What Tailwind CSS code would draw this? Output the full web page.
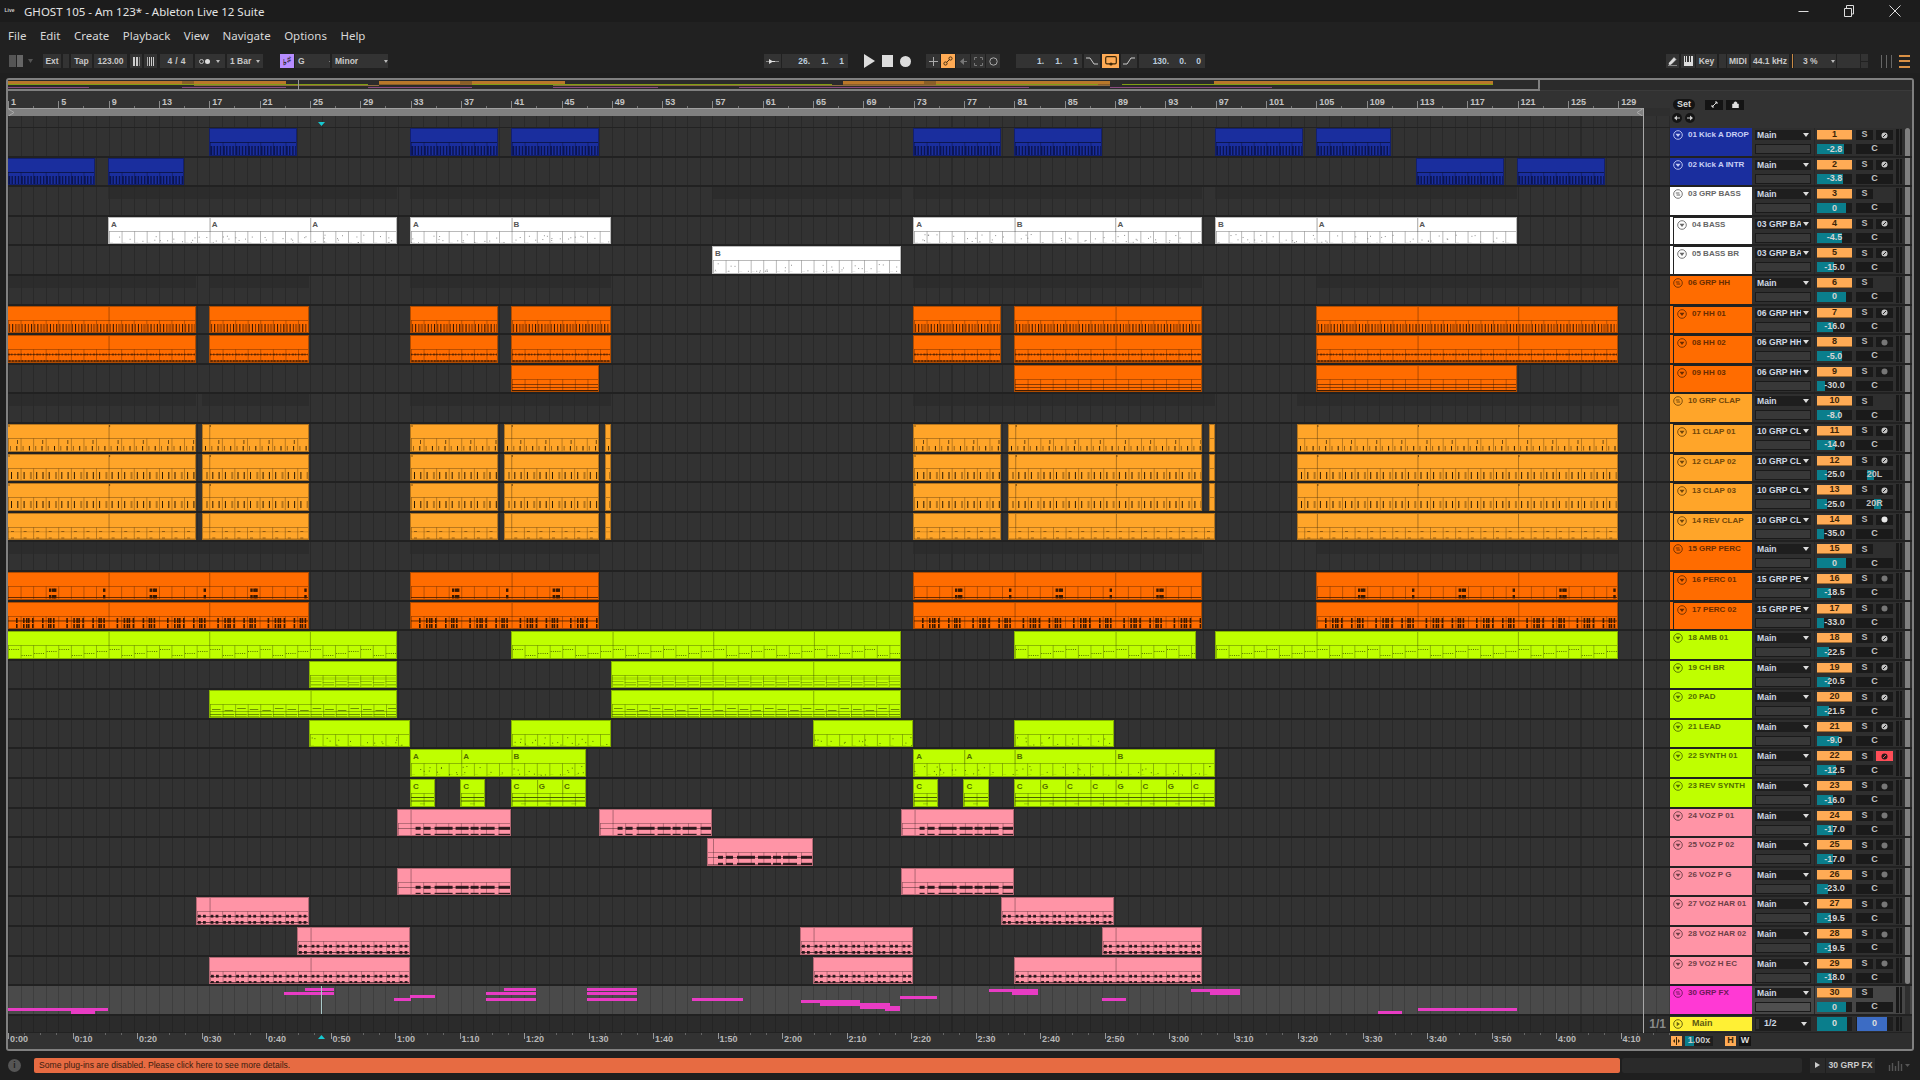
<!DOCTYPE html>
<html lang="en">
<head>
<meta charset="utf-8">
<title>GHOST 105 - Am 123* - Ableton Live 12 Suite</title>
<script src="https://cdn.jsdelivr.net/npm/@tailwindcss/browser@4"></script>
</head>
<body class="m-0 w-[1920px] h-[1080px] overflow-hidden bg-[#1f1f1f] font-['Liberation_Sans',sans-serif] text-[#d0d0d0] flex flex-col">

<!-- title bar -->
<div class="h-[22px] shrink-0 bg-[#1c1c1c] flex items-center relative">
  <div class="ml-[4px] w-[11px] h-[9px] flex items-center justify-center text-[5px] font-bold text-[#cfcfcf]">Live</div>
  <div class="ml-[9px] mt-[1px] font-['Noto_Sans',sans-serif] text-[11.5px] text-[#e4e4e4]">GHOST 105 - Am 123* - Ableton Live 12 Suite</div>
  <div class="ml-auto flex items-center">
    <svg class="w-[11px] h-[11px] mr-[35px]" viewBox="0 0 11 11"><path d="M0.5 5.5H10.5" stroke="#ddd" fill="none"/></svg>
    <svg class="w-[10px] h-[12px] mr-[35px]" viewBox="0 0 10 12"><path d="M0.5 3.5H7.5V11.5H0.5ZM2.5 3.5V0.5H9.5V9H7.5" stroke="#ddd" fill="none"/></svg>
    <svg class="w-[12px] h-[12px] mr-[19px]" viewBox="0 0 12 12"><path d="M0.5 0.5L11.5 11.5M11.5 0.5L0.5 11.5" stroke="#ddd" fill="none"/></svg>
  </div>
</div>

<!-- menu -->
<div class="h-[27px] shrink-0 bg-[#212121] flex items-center pl-[8px] pt-[1px] gap-[13.5px] font-['Noto_Sans',sans-serif] text-[11.5px] text-[#d8d8d8]">
  <span>File</span><span>Edit</span><span>Create</span><span>Playback</span><span>View</span><span>Navigate</span><span>Options</span><span>Help</span>
</div>

<!-- control bar -->
<div class="h-[24px] shrink-0 bg-[#212121] flex items-center text-[8.5px] font-bold text-[#c8c8c8] whitespace-nowrap">
  <div class="ml-[9px] w-[14px] h-[12px] flex gap-[1px]"><div class="w-[6.5px] bg-[#555]"></div><div class="w-[6.5px] bg-[#666]"></div></div>
  <svg class="ml-[5px] w-[5px] h-[4px]" viewBox="0 0 5 4"><path d="M0 0H5L2.5 4Z" fill="#555"/></svg>
  <div class="ml-[10px] w-[18px] h-[14px] bg-[#333] flex items-center justify-center">Ext</div>
  <div class="ml-[2px] w-[6px] h-[14px] bg-[#333]"></div>
  <div class="ml-[2px] w-[21px] h-[14px] bg-[#333] flex items-center justify-center">Tap</div>
  <div class="ml-[2px] w-[33px] h-[14px] bg-[#333] flex items-center justify-center">123.00</div>
  <div class="ml-[3px] w-[12px] h-[14px] bg-[#333] flex items-center justify-center gap-[1px]"><i class="w-[2px] h-[9px] bg-[#ccc]"></i><i class="w-[2px] h-[9px] bg-[#ccc]"></i><i class="w-[1px] h-[9px] bg-[#888]"></i></div>
  <div class="ml-[2px] w-[13px] h-[14px] bg-[#333] flex items-center justify-center gap-[1px]"><i class="w-[1px] h-[9px] bg-[#aaa]"></i><i class="w-[1px] h-[9px] bg-[#ccc]"></i><i class="w-[1px] h-[9px] bg-[#ccc]"></i><i class="w-[1px] h-[9px] bg-[#ccc]"></i></div>
  <div class="ml-[3px] w-[33px] h-[14px] bg-[#333] flex items-center justify-center gap-[3px]"><span>4</span><span>/</span><span>4</span></div>
  <div class="ml-[2px] w-[30px] h-[14px] bg-[#333] flex items-center pl-[4px] gap-[1px]"><i class="w-[5px] h-[5px] rounded-full border border-[#bbb]"></i><i class="w-[5px] h-[5px] rounded-full bg-[#ddd]"></i><svg class="ml-[5px] w-[4px] h-[3px]" viewBox="0 0 4 3"><path d="M0 0H4L2 3Z" fill="#bbb"/></svg></div>
  <div class="ml-[2px] w-[36px] h-[14px] bg-[#333] flex items-center pl-[3px]">1 Bar<svg class="ml-[5px] w-[4px] h-[3px]" viewBox="0 0 4 3"><path d="M0 0H4L2 3Z" fill="#bbb"/></svg></div>
  <div class="ml-[17px] w-[14px] h-[14px] bg-[#b78dff] text-[#222] flex items-center justify-center text-[8px]"><span class="mt-[3px]">♭</span><span class="mt-[-3px]">♯</span></div>
  <div class="ml-[1px] w-[35px] h-[14px] bg-[#333] flex items-center pl-[3px]">G<svg class="ml-[24px] w-[4px] h-[3px]" viewBox="0 0 4 3"><path d="M0 0H4L2 3Z" fill="#bbb"/></svg></div>
  <div class="ml-[2px] w-[56px] h-[14px] bg-[#333] flex items-center pl-[3px]">Minor<svg class="ml-[26px] w-[4px] h-[3px]" viewBox="0 0 4 3"><path d="M0 0H4L2 3Z" fill="#bbb"/></svg></div>

  <!-- arrangement position -->
  <div class="ml-[376px] w-[17px] h-[14px] bg-[#333] flex items-center justify-center"><svg class="w-[13px] h-[7px]" viewBox="0 0 13 7"><path d="M0 3.5H5M9 3.5H13" stroke="#888"/><path d="M3 1L7 3.5L3 6Z" fill="#ddd"/><path d="M4 3H9V4H4Z" fill="#ddd"/></svg></div>
  <div class="ml-[1px] w-[66px] h-[14px] bg-[#333] flex items-center justify-end pr-[4px] gap-[11px] text-[#bcccdc]"><span>26.</span><span>1.</span><span>1</span></div>
  <svg class="ml-[16px] w-[11px] h-[14px]" viewBox="0 0 11 14"><path d="M0 0L11 7L0 14Z" fill="#dcdcdc"/></svg>
  <div class="ml-[7px] w-[11px] h-[12px] bg-[#dcdcdc]"></div>
  <div class="ml-[7px] w-[11px] h-[11px] rounded-full bg-[#dcdcdc]"></div>
  <div class="ml-[15px] w-[14px] h-[14px] bg-[#333] flex items-center justify-center"><svg class="w-[9px] h-[9px]" viewBox="0 0 9 9"><path d="M4.5 0V9M0 4.5H9" stroke="#aaa"/></svg></div>
  <div class="ml-[1px] w-[14px] h-[14px] bg-[#ffab55] flex items-center justify-center"><svg class="w-[10px] h-[10px]" viewBox="0 0 10 10"><circle cx="2.5" cy="7.5" r="1.6" fill="none" stroke="#4a3010"/><circle cx="7.5" cy="2.5" r="1.6" fill="none" stroke="#4a3010"/><path d="M3.5 6.5L6.5 3.5" stroke="#4a3010"/></svg></div>
  <div class="ml-[1px] w-[14px] h-[14px] bg-[#333] flex items-center justify-center"><svg class="w-[8px] h-[7px]" viewBox="0 0 8 7"><path d="M5 0V7L1 3.5Z" fill="#777"/><path d="M5 3H8V4H5Z" fill="#777"/></svg></div>
  <div class="ml-[1px] w-[14px] h-[14px] bg-[#333] flex items-center justify-center"><svg class="w-[9px] h-[9px]" viewBox="0 0 9 9"><path d="M0.5 3V0.5H3M6 0.5H8.5V3M8.5 6V8.5H6M3 8.5H0.5V6" stroke="#777" fill="none"/></svg></div>
  <div class="ml-[1px] w-[14px] h-[14px] bg-[#333] flex items-center justify-center"><svg class="w-[9px] h-[9px]" viewBox="0 0 9 9"><circle cx="4.5" cy="4.5" r="3.7" stroke="#aaa" fill="none"/></svg></div>

  <!-- loop -->
  <div class="ml-[16px] w-[66px] h-[14px] bg-[#333] flex items-center justify-end pr-[4px] gap-[11px] text-[#bcccdc]"><span>1.</span><span>1.</span><span>1</span></div>
  <div class="ml-[2px] w-[16px] h-[14px] bg-[#333] flex items-center justify-center"><svg class="w-[12px] h-[8px]" viewBox="0 0 12 8"><path d="M0 1H4L8 7H12" stroke="#ccc" fill="none"/></svg></div>
  <div class="ml-[2px] w-[17px] h-[14px] bg-[#ffab55] flex items-center justify-center"><svg class="w-[12px] h-[10px]" viewBox="0 0 12 10"><path d="M2 0.7H10Q11.3 0.7 11.3 2V6.5Q11.3 7.8 10 7.8H2Q0.7 7.8 0.7 6.5V2Q0.7 0.7 2 0.7Z" fill="none" stroke="#3c2708" stroke-width="1.2"/><circle cx="6" cy="8" r="1.6" fill="#3c2708"/></svg></div>
  <div class="ml-[2px] w-[16px] h-[14px] bg-[#333] flex items-center justify-center"><svg class="w-[12px] h-[8px]" viewBox="0 0 12 8"><path d="M0 7H4L8 1H12" stroke="#ccc" fill="none"/></svg></div>
  <div class="ml-[2px] w-[66px] h-[14px] bg-[#333] flex items-center justify-end pr-[4px] gap-[10px] text-[#bcccdc]"><span>130.</span><span>0.</span><span>0</span></div>

  <!-- right side -->
  <div class="ml-[461px] w-[13px] h-[14px] bg-[#333] flex items-center justify-center"><svg class="w-[9px] h-[10px]" viewBox="0 0 9 10"><path d="M1 7L6 1.5L8 3.5L3 8.5H1ZM0 9.5H9" fill="#ddd" stroke="#ddd" stroke-width="0.5"/></svg></div>
  <div class="ml-[2px] w-[14px] h-[14px] bg-[#333] flex items-center justify-center"><div class="w-[9px] h-[10px] bg-[#ddd] flex gap-[1px] pl-[1px]"><i class="w-[1.5px] h-[6px] bg-[#333]"></i><i class="w-[1.5px] h-[6px] bg-[#333]"></i><i class="w-[1.5px] h-[6px] bg-[#333]"></i></div></div>
  <div class="ml-[1px] w-[21px] h-[14px] bg-[#333] flex items-center justify-center">Key</div>
  <div class="ml-[2px] w-[7px] h-[14px] bg-[#333]"></div>
  <div class="ml-[1px] w-[22px] h-[14px] bg-[#333] flex items-center justify-center">MIDI</div>
  <div class="ml-[2px] w-[38px] h-[14px] bg-[#333] flex items-center justify-center">44.1 kHz</div>
  <div class="ml-[3px] w-[1px] h-[14px] bg-[#c98a45]"></div>
  <div class="ml-[1px] w-[42px] h-[14px] bg-[#333] flex items-center pl-[9px]">3 %<svg class="ml-[13px] w-[4px] h-[3px]" viewBox="0 0 4 3"><path d="M0 0H4L2 3Z" fill="#bbb"/></svg></div>
  <div class="ml-[1px] w-[23px] h-[14px] bg-[#333]"></div>
  <div class="ml-[1px] w-[7px] h-[14px] flex flex-col gap-[1px]"><div class="flex-1 bg-[#333]"></div><div class="flex-1 bg-[#333]"></div></div>
  <div class="ml-[13px] w-[11px] h-[13px] flex justify-between"><i class="w-[1px] bg-[#666]"></i><i class="w-[1px] bg-[#666]"></i><i class="w-[1px] bg-[#666]"></i></div>
  <div class="ml-[7px] w-[11px] h-[13px] flex flex-col justify-between"><i class="h-[2px] bg-[#d99045]"></i><i class="h-[2px] bg-[#d99045]"></i><i class="h-[2px] bg-[#d99045]"></i></div>
</div>

<!-- main frame -->
<div id="frame" class="relative mt-[5px] ml-[6px] w-[1908px] h-[973px] shrink-0 border-2 border-[#808080] rounded-[3px] bg-[#2e2e2e] flex flex-col overflow-hidden">
  <div id="overview" class="relative h-[10px] shrink-0 bg-[#2b2b2b]"></div>
  <div class="h-[1px] shrink-0 bg-[#3a3a3a]"></div>
  <div class="flex h-[37px] shrink-0">
    <div class="w-[1662px] flex flex-col">
      <div id="ruler" class="relative h-[17px] bg-[#323232] text-[9px] font-bold text-[#c4c4c4]"></div>
      <div class="h-[8px] bg-[#808080] border-t border-[#a0a0a0] w-[1635px] relative flex items-center">
        <svg class="absolute left-0 top-0 w-[7px] h-[7px]" viewBox="0 0 7 7"><path d="M0.5 0L6 3.5L0.5 7" stroke="#aaa" fill="none"/></svg>
        <svg class="absolute right-0 top-0 w-[7px] h-[7px]" viewBox="0 0 7 7"><path d="M6.5 0L1 3.5L6.5 7" stroke="#aaa" fill="none"/></svg>
      </div>
      <div class="relative h-[11px] bg-[#323232] bg-[repeating-linear-gradient(90deg,#292929_0_1px,transparent_1px_12.58px)]">
        <svg class="absolute left-[310px] top-[6px] w-[7px] h-[4px]" viewBox="0 0 7 4"><path d="M0 0H7L3.5 4Z" fill="#16c8d0"/></svg>
      </div>
      <div class="h-[1px] bg-[#222]"></div>
    </div>
    <div class="w-[242px] bg-[#323232] relative">
      <div class="flex items-center h-[15px] mt-[6px] pl-[3px] text-[9px] font-bold text-[#d8d8d8]">
        <div class="w-[22px] h-[11px] rounded-full bg-[#141414] flex items-center justify-center">Set</div>
        <div class="ml-[10px] w-[18px] h-[10px] bg-[#141414] flex items-center justify-center"><svg class="w-[7px] h-[7px]" viewBox="0 0 7 7"><path d="M1 6L6 1M4 1H6V3M1 4V6H3" stroke="#ddd" fill="none"/></svg></div>
        <div class="ml-[3px] w-[18px] h-[10px] bg-[#141414] flex items-center justify-center"><svg class="w-[7px] h-[7px]" viewBox="0 0 7 7"><path d="M0.5 3H6.5V7H0.5ZM2 3V1.5Q3.5 0 5 1.5V3" fill="#ddd" stroke="#ddd" stroke-width="0.5"/></svg></div>
      </div>
      <div class="flex pl-[2px] gap-[3px] mt-[1px]">
        <div class="w-[10px] h-[10px] rounded-full bg-[#141414] flex items-center justify-center"><svg class="w-[6px] h-[6px]" viewBox="0 0 6 6"><path d="M0 3L3 0.5V5.5ZM3 2.5H6V3.5H3Z" fill="#ccc"/></svg></div>
        <div class="w-[10px] h-[10px] rounded-full bg-[#141414] flex items-center justify-center"><svg class="w-[6px] h-[6px]" viewBox="0 0 6 6"><path d="M6 3L3 0.5V5.5ZM3 2.5H0V3.5H3Z" fill="#ccc"/></svg></div>
      </div>
    </div>
  </div>
  <div id="tracks" class="h-[888px] shrink-0 flex flex-col"></div>
  <!-- master row -->
  <div class="flex h-[17px] shrink-0 border-b border-[#222]">
    <div class="w-[1662px] relative bg-[#2b2b2b] bg-[repeating-linear-gradient(90deg,#242424_0_1px,transparent_1px_12.58px)] flex justify-end items-center pr-[4px] text-[#8a8a8a] text-[12px] font-bold">1/1</div>
    <div class="w-[242px] flex pt-[1px] pb-[1px] bg-[#2e2e2e] text-[9px] font-bold">
      <div class="w-[82px] bg-[#fff034] text-[#5e5a10] flex items-center pl-[3px]">
        <svg class="w-[10px] h-[10px]" viewBox="0 0 10 10"><circle cx="5" cy="5" r="4.3" fill="none" stroke="#6a6510"/><path d="M3.7 2.8L7 5L3.7 7.2Z" fill="#6a6510"/></svg>
        <span class="ml-[9px]">Main</span>
      </div>
      <div class="ml-[3px] w-[56px] bg-[#1e1e1e] text-[#cfd8e4] flex items-center"><i class="w-[3px] h-[10px] ml-[1px] bg-[#333]"></i><span class="ml-[5px]">1/2</span><svg class="ml-auto mr-[4px] w-[6px] h-[4px]" viewBox="0 0 6 4"><path d="M0 0H6L3 4Z" fill="#ddd"/></svg></div>
      <div class="ml-[6px] w-[35px] relative bg-[#1e1e1e] text-[#ddd] flex items-center justify-center"><div class="absolute left-0 inset-y-0 w-[30px] bg-[#0a7e8c]"></div><span class="relative">0</span></div>
      <div class="ml-[4px] w-[37px] relative bg-[#1e1e1e] text-[#ddd] flex items-center justify-center"><div class="absolute left-[1px] inset-y-0 w-[30px] bg-[#3c6cc4]"></div><span class="relative">0</span></div>
      <div class="ml-[3px] w-[6px] flex gap-[1px]"><i class="flex-1 bg-[#181818]"></i><i class="flex-1 bg-[#181818]"></i></div>
    </div>
  </div>
  <!-- bottom ruler row -->
  <div class="flex h-[16px] shrink-0">
    <div id="timeruler" class="relative w-[1662px] bg-[#323232] text-[9px] font-bold text-[#b8b8b8]"></div>
    <div class="w-[242px] bg-[#2e2e2e] flex items-center text-[9px] font-bold">
      <div class="ml-[1px] w-[11px] h-[10px] bg-[#ffab55] flex items-center justify-center"><svg class="w-[9px] h-[8px]" viewBox="0 0 9 8"><path d="M4.5 0V8" stroke="#3c2708"/><path d="M3 2V6L1 4ZM6 2V6L8 4Z" fill="#3c2708"/></svg></div>
      <div class="ml-[3px] w-[28px] h-[10px] relative bg-[#1e1e1e] flex items-center justify-center text-[#ccc]"><div class="absolute left-0 inset-y-0 w-[9px] bg-[#0a7e8c]"></div><span class="relative">1.00x</span></div>
      <div class="ml-[12px] w-[11px] h-[10px] bg-[#ffab55] text-[#3c2708] flex items-center justify-center">H</div>
      <div class="ml-[3px] w-[12px] h-[10px] bg-[#141414] text-[#ddd] flex items-center justify-center">W</div>
    </div>
  </div>
  <div class="absolute left-[1635px] top-[28px] w-[1px] h-[925px] bg-[#a8a8a8]"></div>
</div>

<!-- status bar -->
<div class="h-[29px] shrink-0 pt-[2px] pb-[3px] bg-[#1f1f1f] flex items-center text-[8.6px]">
  <div class="ml-[8px] w-[13px] h-[13px] rounded-full bg-[#555] text-[#1f1f1f] font-bold flex items-center justify-center">i</div>
  <div class="ml-[13px] w-[1586px] h-[15px] bg-[#e76b42] rounded-[2px] text-[#3a1c0f] flex items-center pl-[5px]">Some plug-ins are disabled. Please click here to see more details.</div>
  <div class="ml-[2px] w-[180px] h-[15px] bg-[#2a2a2a] rounded-[2px]"></div>
  <div class="ml-[8px] w-[15px] h-[15px] bg-[#2a2a2a] flex items-center justify-center"><svg class="w-[5px] h-[6px]" viewBox="0 0 5 6"><path d="M0 0L5 3L0 6Z" fill="#ccc"/></svg></div>
  <div class="ml-[1px] w-[49px] h-[15px] bg-[#2a2a2a] text-[#ccc] font-bold flex items-center justify-center">30 GRP FX</div>
  <svg class="ml-[13px] w-[22px] h-[11px]" viewBox="0 0 22 11"><path d="M1.5 5V11M4.5 3V11M7.5 6V11M10.5 1V11M13.5 4V11" stroke="#555" stroke-width="1.4"/><path d="M17 4H22L19.5 7Z" fill="#555"/></svg>
</div>

<script>
const P = 12.58;
const COL = {
  b: {bg:'bg-[#1a2e9e]', hd:'bg-[#1a2e9e] text-[#c9d0f5]', bd:'border-[#121f6e]', ink:'#0a1450', lab:'text-[#0d1a66]'},
  w: {bg:'bg-[#ffffff]', hd:'bg-[#ffffff] text-[#666666]', bd:'border-[#bbbbbb]', ink:'#777777', lab:'text-[#555555]'},
  o: {bg:'bg-[#ff6c00]', hd:'bg-[#ff6c00] text-[#6a2c00]', bd:'border-[#b04c00]', ink:'#3a1800', lab:'text-[#6a2c00]'},
  l: {bg:'bg-[#ffa529]', hd:'bg-[#ffa529] text-[#70460a]', bd:'border-[#b3741d]', ink:'#2f1d04', lab:'text-[#70460a]'},
  g: {bg:'bg-[#bfff00]', hd:'bg-[#bfff00] text-[#506b00]', bd:'border-[#86b300]', ink:'#3c5000', lab:'text-[#506b00]'},
  p: {bg:'bg-[#ff94a6]', hd:'bg-[#ff94a6] text-[#6d3f47]', bd:'border-[#b36874]', ink:'#1c1012', lab:'text-[#6d3f47]'},
  m: {bg:'bg-[#ff39d4]', hd:'bg-[#ff39d4] text-[#6d1859]', bd:'border-[#b32895]', ink:'#500', lab:'text-[#6d1859]'}
};
const c47 = [[1,16],[17,25],[33,40],[41,49],[73,80],[81,96],[105,129]];
const clapA = [[1,16],[16.5,25],[33,40],[40.5,48],[48.5,49],[73,80],[80.5,96],[96.5,97],[103.5,129]];
const clapB = [[1,16],[16.5,25],[33,40],[40.5,48],[48.5,49],[73,80],[80.5,97],[103.5,129]];
const perc = [[1,25],[33,48],[73,96],[105,129]];
const pink1 = [[32,41],[48,57],[72,81]];
const T = [
 ['01 Kick A DROP','b','Main',-2.8,'x',0,0,'kick',[[17,24],[33,40],[41,48],[73,80],[81,88],[97,104],[105,111]]],
 ['02 Kick A INTR','b','Main',-3.8,'x',0,0,'kick',[[1,8],[9,15],[113,120],[121,128]]],
 ['03 GRP BASS','w','Main',0,'',0,1,'band',[[9,32],[33,48],[57,72],[73,96],[97,121]]],
 ['04 BASS','w','03 GRP BASS',-4.5,'x','w',0,'dots',[[9,32,[[9,'A'],[17,'A'],[25,'A']]],[33,49,[[33,'A'],[41,'B']]],[73,96,[[73,'A'],[81,'B'],[89,'A']]],[97,121,[[97,'B'],[105,'A'],[113,'A']]]]],
 ['05 BASS BR','w','03 GRP BASS',-15,'x','w',0,'dots',[[57,72,[[57,'B']]]]],
 ['06 GRP HH','o','Main',0,'',0,1,'band',[[1,16],[17,25],[33,49],[73,96],[105,129]]],
 ['07 HH 01','o','06 GRP HH',-16,'x','o',0,'hh1',c47],
 ['08 HH 02','o','06 GRP HH',-5,'d','o',0,'hh2',c47],
 ['09 HH 03','o','06 GRP HH',-30,'d','o',0,'hh3',[[41,48],[81,96],[105,121]]],
 ['10 GRP CLAP','l','Main',-8,'',0,1,'band',[[1,16],[16.5,25],[33,49],[73,97],[103.5,129]]],
 ['11 CLAP 01','l','10 GRP CLAP',-14,'x','l',0,'clap1',clapA],
 ['12 CLAP 02','l','10 GRP CLAP',-25,'x','l',0,'clap2',clapA],
 ['13 CLAP 03','l','10 GRP CLAP',-25,'x','l',0,'clap2',clapA],
 ['14 REV CLAP','l','10 GRP CLAP',-35,'w','l',0,'clap4',clapB],
 ['15 GRP PERC','o','Main',0,'',0,1,'band',perc],
 ['16 PERC 01','o','15 GRP PERC',-18.5,'d','o',0,'perc1',perc],
 ['17 PERC 02','o','15 GRP PERC',-33,'d','o',0,'perc2',perc],
 ['18 AMB 01','g','Main',-22.5,'x',0,0,'amb',[[1,32],[41,72],[81,95.5],[97,129]]],
 ['19 CH BR','g','Main',-20.5,'x',0,0,'chbr',[[25,32],[49,72]]],
 ['20 PAD','g','Main',-21.5,'x',0,0,'pad',[[17,32],[49,72]]],
 ['21 LEAD','g','Main',-9,'x',0,0,'dots',[[25,33],[41,49],[65,73],[81,89]]],
 ['22 SYNTH 01','g','Main',-12.5,'r',0,0,'dots',[[33,47,[[33,'A'],[37,'A'],[41,'B']]],[73,97,[[73,'A'],[77,'A'],[81,'B'],[89,'B']]]]],
 ['23 REV SYNTH','g','Main',-16,'d',0,0,'rev',[[33,35,[[33,'C']]],[37,39,[[37,'C']]],[41,47,[[41,'C'],[43,'G'],[45,'C']]],[73,75,[[73,'C']]],[77,79,[[77,'C']]],[81,97,[[81,'C'],[83,'G'],[85,'C'],[87,'C'],[89,'G'],[91,'C'],[93,'G'],[95,'C']]]]],
 ['24 VOZ P 01','p','Main',-17,'d',0,0,'voz1',pink1],
 ['25 VOZ P 02','p','Main',-17,'d',0,0,'voz1',[[56.6,65]]],
 ['26 VOZ P G','p','Main',-23,'d',0,0,'voz1',[[32,41],[72,81]]],
 ['27 VOZ HAR 01','p','Main',-19.5,'d',0,0,'voz2',[[16,25],[80,89]]],
 ['28 VOZ HAR 02','p','Main',-19.5,'d',0,0,'voz2',[[24,33],[64,73],[88,96]]],
 ['29 VOZ H EC','p','Main',-18,'d',0,0,'voz2',[[17,33],[65,73],[81,96]]],
 ['30 GRP FX','m','Main',0,'',0,1,'fx',[]]
];
const FX = [[8,108,1008,1],[71,95,1011,1],[284,334,992,1],[305,334,988,1],[394,411,998,1],[410,435,995,1],[486,536,992,1],[486,536,998,1],[504,536,988,1],[587,637,988,1],[587,637,992,1],[587,637,998,1],[692,743,998,1],[801,860,1000,1],[820,890,1003,1],[860,900,1006,1],[885,900,1008,1],[900,937,996,1],[989,1038,989,1],[1012,1038,992,1],[1102,1126,998,1],[1191,1240,989,1],[1210,1240,992,1],[1378,1402,1011,1],[1418,1517,1008,1]];

let seed = 7;
const rnd = () => (seed = (seed * 16807) % 2147483647) / 2147483647;
const rect = (x,y,w,h,f,o) => `<rect x="${x.toFixed(1)}" y="${y}" width="${w}" height="${h}" fill="${f}"${o?` fill-opacity="${o}"`:''}/>`;

function notes(p, ink, W, start) {
  let s = '';
  const off = (start - 1) * P;
  const each = (step, fn) => { const first = Math.ceil(off/step)*step - off; for (let x = first; x < W; x += step) fn(x, Math.round((x+off)/step)); };
  if (p==='kick') { s += rect(0,13,W,1,'#000',.3); each(P/4, (x,i)=> s += rect(x+.4,17,i%4==0?1.8:1.4,9,ink)); }
  if (p==='hh1') { each(P/4,(x,i)=> s += i%8==3? rect(x,17,2.6,8,ink,.35) : rect(x+1,17,1.1,8,ink,i%2?1:.7)); }
  if (p==='hh2') { s += rect(0,18,W,1,ink,.55)+rect(0,24.5,W,1.1,ink,.85); each(P/4,(x,i)=>{ s += rect(x,17.5,i%3?1.4:2.2,2,ink,.6)+rect(x+1,24,1.6,2,ink,.6); }); }
  if (p==='hh3') { s += rect(0,18,W,1,ink,.6)+rect(0,21,W,1,ink,.6)+rect(0,24,W,1.6,ink,.95); }
  if (p==='clap1') { each(P/2,(x,i)=> s += rect(x+2,21,1,4.5,ink,i%2?1:.5)); each(P*2,(x)=> s += rect(x+9,15,1,4,ink,.7)); each(P*8,(x)=> s += rect(x+.5,0,1,2,ink,.6)); }
  if (p==='clap2') { each(P/2,(x,i)=> s += rect(x+3,17,i%4==3?2:1,7,ink,i%4==3?.35:1)); each(P*8,(x)=> s += rect(x+.5,0,1,2,ink,.6)); }
  if (p==='clap4') { each(P,(x)=> s += rect(x+3,17,3,1,ink,.5)+rect(x+3,23.5,3,1,ink,.5)); s += rect(0,17.5,W,.7,ink,.25)+rect(0,24,W,.7,ink,.25); }
  if (p==='perc1') { s += rect(0,24,W,.9,ink,.85); each(P*8,(x)=>{ for (const b of [43,46,48,97]) s += rect(x+b-2,15.5,2.4,3.4,ink)+rect(x+b-2,22,2.4,3.4,ink); }); }
  if (p==='perc2') { s += rect(0,17.5,W,.9,ink,.85); each(P*4,(x)=>{ for (const b of [9,16,19,21,25,35,41,43,46]) s += rect(x+b-1,15,1.6,5,ink)+rect(x+b-1,21,1.6,5,ink); }); }
  if (p==='amb') { each(P,(x,i)=>{ const y = 17+((i*3)%4)*2; for (let d=1;d<10;d+=2.2) s += rect(x+d,y,1,.8,ink); }); }
  if (p==='chbr') { s += rect(0,15,W,3,ink,.14); each(P,(x,i)=>{ s += rect(x,19+(i%2),P-1,.9,ink,.4)+rect(x+1,22,P-2,1.5,ink,.35)+rect(x,25,P-1,1.2,ink,.5); }); }
  if (p==='pad') { s += rect(0,20,W,1,ink,.4); each(P,(x,i)=>{ s += rect(x+2,17+(i%3),P-4,.9,ink,.7)+rect(x,23,P-1,.9,ink,.7)+rect(x,25,P-1,1,ink,.4); }); }
  if (p==='dots') { each(P,(x,i)=>{ const n = 1+Math.floor(rnd()*3); for (let k=0;k<n;k++) s += rect(x+rnd()*11,16+rnd()*9,1,1,ink,.8); s += rect(x+1,24,3,.7,ink,.18); }); }
  if (p==='rev') { s += rect(0,17,W,1,ink,.9)+rect(0,20.5,W,1,ink,.9); each(P*2,(x)=> s += rect(x+9,23,5,1.5,ink,.18)); }
  if (p==='voz1') { s += rect(0,18,W,.8,ink,.5)+rect(0,25,W,.8,ink,.5); each(P*8,(x)=>{ for (const [a,b] of [[5,10],[13,20],[24,42],[45,58],[60,68],[70,84],[88,100]]) s += rect(x+a,16.8,b-a,3,ink,.9)+rect(x+a,23.8,b-a,3,ink,.9); }); }
  if (p==='voz2') { s += rect(0,18,W,.7,ink,.7)+rect(0,24,W,.8,ink,.8); each(P,(x,i)=>{ for (const d of [1,6]) s += rect(x+d,16.8,2.8,2.8,ink,.9)+rect(x+d,23,2.8,2.8,ink,.9); }); }
  return s;
}

function clipHtml(t, cl) {
  const [a,b,labs] = cl;
  const col = COL[t[1]];
  const w = (b-a)*P;
  const L = (a-1)*P-0.6;
  if (t[7]==='band') return `<div class="absolute top-0 h-[12px] bg-[#2a2a2a]/70" style="left:${L}px;width:${w}px"></div>`;
  let lines = '';
  const off = (a-1)*P;
  for (let x = Math.ceil(off/P)*P-off; x < w; x += P) lines += rect(x,13.5,.9,15,'#000',.3);
  const seps = labs ? labs.map(l => l[0]) : [];
  if (labs) for (const s of seps) if (s>a) lines += rect((s-a)*P,0,.9,13.5,'#000',.4);
  if (!labs) for (let x = Math.ceil(off/(P*8))*P*8-off; x < w; x += P*8) if (x>1) lines += rect(x,0,.9,13.5,'#000',.35);
  lines += rect(0,13,w,.9,'#000',.3);
  const text = labs ? labs.map(l => `<span class="absolute top-[2px] text-[8px] font-bold leading-[9px] ${col.lab}" style="left:${(l[0]-a)*P+2}px">${l[1]}</span>`).join('') : '';
  return `<div class="absolute inset-y-0 overflow-hidden border border-solid ${col.bd} ${col.bg}" style="left:${L}px;width:${w}px"><svg class="absolute left-0 top-0 w-full h-full">${lines}${notes(t[7],col.ink,w,a)}</svg>${text}</div>`;
}

function fill(v) {
  const tb = [[0,83],[-2.8,76],[-4.5,71],[-5,72],[-8,65],[-9,62],[-14,50],[-16,47],[-18,42],[-22,34],[-25,29],[-30,23],[-35,20]];
  for (let i=0;i<tb.length-1;i++) if (v<=tb[i][0] && v>=tb[i+1][0]) { const r=(v-tb[i+1][0])/(tb[i][0]-tb[i+1][0]); return tb[i+1][1]+r*(tb[i][1]-tb[i+1][1]); }
  return 20;
}
function arm(k) {
  if (k==='') return '';
  const box = k==='r' ? 'bg-[#ff4d57]' : 'bg-[#1a1a1a]';
  let icon = '';
  if (k==='x') icon = '<svg class="w-[7px] h-[7px]" viewBox="0 0 7 7"><circle cx="3.5" cy="3.5" r="3" fill="#c4c4c4"/><path d="M2 5L5 2" stroke="#222"/></svg>';
  if (k==='r') icon = '<svg class="w-[7px] h-[7px]" viewBox="0 0 7 7"><circle cx="3.5" cy="3.5" r="3" fill="#2a1a1a"/><path d="M2 5L5 2" stroke="#ff4d57"/></svg>';
  if (k==='d') icon = '<svg class="w-[7px] h-[7px]" viewBox="0 0 7 7"><circle cx="3.5" cy="3.5" r="3" fill="#777"/></svg>';
  if (k==='w') icon = '<svg class="w-[7px] h-[7px]" viewBox="0 0 7 7"><circle cx="3.5" cy="3.5" r="3" fill="#e8e8e8"/></svg>';
  return `<div class="ml-[3px] w-[17px] h-[10px] ${box} flex items-center justify-center">${icon}</div>`;
}
function circ(group, color) {
  const inner = group
   ? '<path d="M2.8 4H6.5M3.5 6H7.2" stroke="currentColor" stroke-width="1" fill="none"/>'
   : '<path d="M2.5 3.8H7.5L5 7Z" fill="currentColor"/>';
  return `<svg class="w-[10px] h-[10px] shrink-0" viewBox="0 0 10 10"><circle cx="5" cy="5" r="4.3" fill="none" stroke="currentColor" stroke-width="0.9"/>${inner}</svg>`;
}

let h = '';
T.forEach((t,i) => {
  const col = COL[t[1]];
  const num = i+1;
  const isFx = num===30;
  const pan = num===12 ? '20L' : num===13 ? '20R' : 'C';
  const panFill = num===12 ? '<div class="absolute left-[11px] inset-y-0 w-[7px] bg-[#0a7e8c]"></div>' : num===13 ? '<div class="absolute left-[18px] inset-y-0 w-[7px] bg-[#0a7e8c]"></div>' : '';
  const head = t[5]
    ? `<div class="w-[82px] flex"><div class="w-[3px] ${COL[t[5]].bg}"></div><div class="w-[1px] bg-[#222]"></div><div class="flex-1 ${col.hd} border-t border-[#222] flex items-start pl-[3px] pt-[2px]">${circ(false)}<span class="ml-[5px] leading-[10px] whitespace-nowrap">${t[0]}</span></div></div>`
    : `<div class="w-[82px] ${col.hd} flex items-start pl-[3px] pt-[2px]">${circ(t[6])}<span class="ml-[5px] leading-[10px] whitespace-nowrap">${t[0]}</span></div>`;
  h += `<div class="flex h-[29.6px] shrink-0 border-b-2 border-[#212121] ${isFx?'bg-[#464646]':'bg-[#2f2f2f]'}">
    <div class="relative w-[1662px] ${isFx?'bg-[#4a4a4a] bg-[repeating-linear-gradient(90deg,#3e3e3e_0_1px,transparent_1px_12.58px)]':'bg-[#323232] bg-[repeating-linear-gradient(90deg,#292929_0_1px,transparent_1px_12.58px)]'}">
      ${t[8].map(c => clipHtml(t,c)).join('')}
      ${isFx ? FX.map(f => `<div class="absolute h-[2.5px] bg-[#e83cc4]" style="left:${f[0]-8}px;width:${f[1]-f[0]}px;top:${f[2]-986}px"></div>`).join('')+'<div class="absolute left-[313px] inset-y-0 w-[1px] bg-[#a9c9c9]"></div>' : ''}
    </div>
    <div class="w-[242px] flex text-[8px] font-bold">
      ${head}
      <div class="w-[3px]"></div>
      <div class="w-[56px] pt-[2px] flex flex-col gap-[4px]">
        <div class="h-[10px] bg-[#1e1e1e] text-[#cfd8e4] text-[8.6px] flex items-center pl-[2px] overflow-hidden relative leading-[10px]"><span class="whitespace-nowrap">${t[2]}</span><span class="absolute right-0 inset-y-0 pl-[2px] pr-[2px] bg-[#1e1e1e] flex items-center"><svg class="w-[6px] h-[4px]" viewBox="0 0 6 4"><path d="M0 0H6L3 4Z" fill="#ddd"/></svg></span></div>
        <div class="h-[10px] ${isFx?'bg-[#4f4f4f]':'bg-[#383838]'} border border-[#1a1a1a]"></div>
      </div>
      <div class="w-[6px] flex justify-center"><i class="w-[1px] bg-[#262626]"></i></div>
      <div class="w-[35px] pt-[2px] flex flex-col gap-[4px]">
        <div class="h-[10px] bg-[#ffab55] border-b border-[#a06a30] text-[#3a2408] flex items-center justify-center text-[9px] leading-[9px]">${num}</div>
        <div class="h-[10px] relative bg-[#1c1c1c] text-[#d4d4d4] flex items-center justify-center text-[9px] leading-[9px]"><div class="absolute left-0 inset-y-0 bg-[#0a7e8c]" style="width:${fill(t[3])}%"></div><span class="relative">${t[3]===0?'0':t[3].toFixed(1)}</span></div>
      </div>
      <div class="w-[4px]"></div>
      <div class="w-[37px] pt-[2px] flex flex-col gap-[4px]">
        <div class="h-[10px] flex"><div class="w-[17px] h-[10px] bg-[#1a1a1a] text-[#bcbcbc] flex items-center justify-center text-[9px]">S</div>${arm(t[4])}</div>
        <div class="h-[10px] relative bg-[#1a1a1a] text-[#c4c4c4] flex items-center justify-center text-[9px]">${panFill}<span class="relative">${pan}</span></div>
      </div>
      <div class="w-[3px]"></div>
      <div class="w-[6px] py-[1px] flex gap-[1px]"><i class="flex-1 bg-[#181818]"></i><i class="flex-1 bg-[#181818]"></i></div>
      <div class="w-[3px]"></div>
      <div class="w-[5px] ${num===1?'rounded-t-[3px] bg-[#808080]':num===29?'rounded-b-[3px] bg-[#808080]':num===30?'bg-[#2f2f2f]':'bg-[#808080]'}"></div>
    </div>
  </div>`;
});
document.getElementById('tracks').innerHTML = h;

let r = '';
for (let b=1;b<=129;b+=2) {
  const x = (b-1)*P;
  if ((b-1)%4===0) r += `<div class="absolute top-[10px] h-[7px] w-[1px] bg-[#8a8a8a]" style="left:${x}px"></div><span class="absolute top-[6px] leading-[10px]" style="left:${x+3}px">${b}</span>`;
  else r += `<div class="absolute top-[15px] h-[2px] w-[1px] bg-[#777]" style="left:${x}px"></div>`;
}
document.getElementById('ruler').innerHTML = r;

let tr = '';
for (let i=0;i<=25;i++) {
  const x = i*64.5;
  const lab = Math.floor(i/6)+':'+String((i%6)*10).padStart(2,'0');
  tr += `<div class="absolute top-0 h-[6px] w-[1px] bg-[#999]" style="left:${x}px"></div><span class="absolute top-[1px] leading-[11px]" style="left:${x+2}px">${lab}</span>`;
  for (let k=1;k<4;k++) tr += `<div class="absolute top-0 h-[2px] w-[1px] bg-[#666]" style="left:${x+k*16.1}px"></div>`;
}
tr += '<svg class="absolute left-[310px] top-[2px] w-[7px] h-[4px]" viewBox="0 0 7 4"><path d="M0 4H7L3.5 0Z" fill="#16c8d0"/></svg>';
document.getElementById('timeruler').innerHTML = tr;

const ov = x => (x-1)*11.6;
let o = '<div class="absolute left-0 top-0 w-[1532px] h-[10px] border-r-2 border-[#808080] rounded-br-[2px]"></div><div class="absolute left-0 top-[9px] w-[1532px] h-[2px] bg-[#808080]"></div>';
for (const [a,b] of [[1,25],[17,25],[33,49],[73,96],[105,129]]) o += `<div class="absolute top-[1px] h-[4px] bg-[#8a5f28]" style="left:${ov(a)}px;width:${(b-a)*11.6}px"></div>`;
for (const [a,b] of c47) o += `<div class="absolute top-[1px] h-[3px] bg-[#b9782a]" style="left:${ov(a)}px;width:${(b-a)*11.6}px"></div>`;
for (const [a,b] of [[1,32],[41,72],[81,95],[97,129],[25,32],[49,72]]) o += `<div class="absolute top-[4px] h-[1px] bg-[#7f9e14]" style="left:${ov(a)}px;width:${(b-a)*11.6}px"></div>`;
for (const [a,b] of [[17,33],[48,57],[56,65],[65,81],[81,96]]) o += `<div class="absolute top-[5px] h-[1px] bg-[#8f6a40]" style="left:${ov(a)}px;width:${(b-a)*11.6}px"></div>`;
for (const [a,b] of [[1,8],[16,25],[32,41],[48,57],[64,81],[80,89],[96,110]]) o += `<div class="absolute top-[7px] h-[1px] bg-[#8a4a80]" style="left:${ov(a)}px;width:${(b-a)*11.6}px"></div>`;
o += '<div class="absolute left-[290px] top-0 w-[1px] h-[10px] bg-[#9a9a9a]"></div>';
document.getElementById('overview').innerHTML = o;
</script>
</body>
</html>
